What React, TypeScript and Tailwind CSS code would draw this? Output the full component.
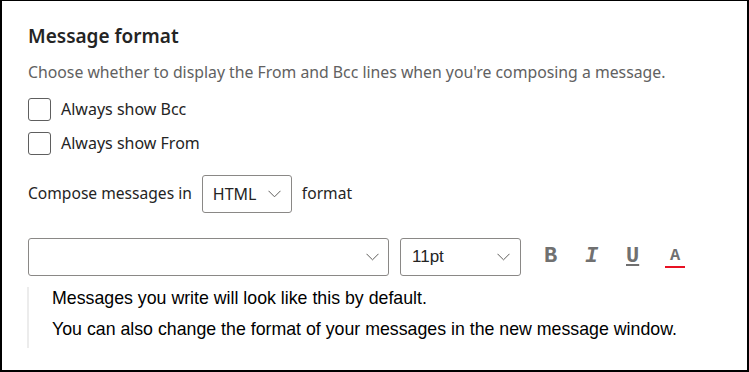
import { ReactNode } from "react";

function Chevron() {
    return (
        <svg width="13" height="8" viewBox="0 0 13 8" fill="none">
            <polyline points="0.5,0.8 6.5,6.8 12.5,0.8" stroke="#605e5c" strokeWidth="1" />
        </svg>
    );
}

function Checkbox({ label }: { label: string }) {
    return (
        <label className="flex items-center gap-[10px] h-[34px]">
            <span className="w-[23px] h-[23px] rounded-[3px] border border-[#5f5f5f] bg-white" />
            <span className="text-[16px] text-[#242424]">{label}</span>
        </label>
    );
}

function Select({ className, children }: { className: string; children?: ReactNode }) {
    return (
        <div
            className={
                "flex items-center justify-between rounded-[3px] border border-[#8a8886] bg-white " +
                className
            }
        >
            {children ?? <span />}
            <Chevron />
        </div>
    );
}

export default function App() {
    return (
        <div
            className="w-[749px] h-[372px] bg-white border-l-2 border-r-2 border-b-2 border-t border-black pl-[26px] overflow-hidden"
            style={{ fontFamily: "'Noto Sans', 'Open Sans', sans-serif" }}
        >
            {/* Heading */}
            <h2 className="mt-[21px] text-[19px] leading-[28px] font-semibold text-[#242424]">
                Message format
            </h2>
            <p className="mt-[11px] text-[15.8px] leading-[22px] text-[#616161]">
                Choose whether to display the From and Bcc lines when you're composing a message.
            </p>

            {/* Checkboxes */}
            <div className="mt-[9px] flex flex-col">
                <Checkbox label="Always show Bcc" />
                <Checkbox label="Always show From" />
            </div>

            {/* Compose format */}
            <div className="mt-[15px] flex items-center gap-[10px] text-[15.6px] text-[#242424]">
                <span>Compose messages in</span>
                <Select className="w-[90px] h-[38px] pl-[10px] pr-[10px]">
                    <span className="text-[16px]">HTML</span>
                </Select>
                <span>format</span>
            </div>

            {/* Font toolbar */}
            <div className="mt-[25px] flex items-center">
                <Select className="w-[361px] h-[38px] pr-[9px]" />
                <Select className="ml-[11px] w-[121px] h-[38px] pl-[11px] pr-[10px]">
                    <span
                        className="text-[17px] text-[#242424]"
                        style={{ fontFamily: "'Liberation Sans', Arial, sans-serif" }}
                    >
                        11pt
                    </span>
                </Select>
                <div
                    className="ml-[23px] flex items-center text-[#707070] font-bold"
                    style={{ fontFamily: "'Liberation Mono', 'Courier New', monospace" }}
                >
                    <span className="w-[41px] text-[22px] leading-none">B</span>
                    <span className="w-[41px] text-[22px] leading-none italic">I</span>
                    <span className="w-[39px] text-[22px] leading-none underline underline-offset-[2px] decoration-[2px]">
                        U
                    </span>
                    <span className="flex flex-col items-center">
                        <span className="text-[17px] leading-none px-[3px]">A</span>
                        <span className="mt-[2px] h-[2px] w-[20px] bg-[#e81123]" />
                    </span>
                </div>
            </div>

            {/* Preview */}
            <div
                className="mt-[11px] -ml-[1px] border-l-2 border-[#ececec] pl-[23px] py-[1px] text-[17.75px] text-black"
                style={{ fontFamily: "'Liberation Sans', Arial, sans-serif" }}
            >
                <p className="leading-[20px]">Messages you write will look like this by default.</p>
                <p className="mt-[11px] leading-[20px] pb-[8px]">
                    You can also change the format of your messages in the new message window.
                </p>
            </div>
        </div>
    );
}
